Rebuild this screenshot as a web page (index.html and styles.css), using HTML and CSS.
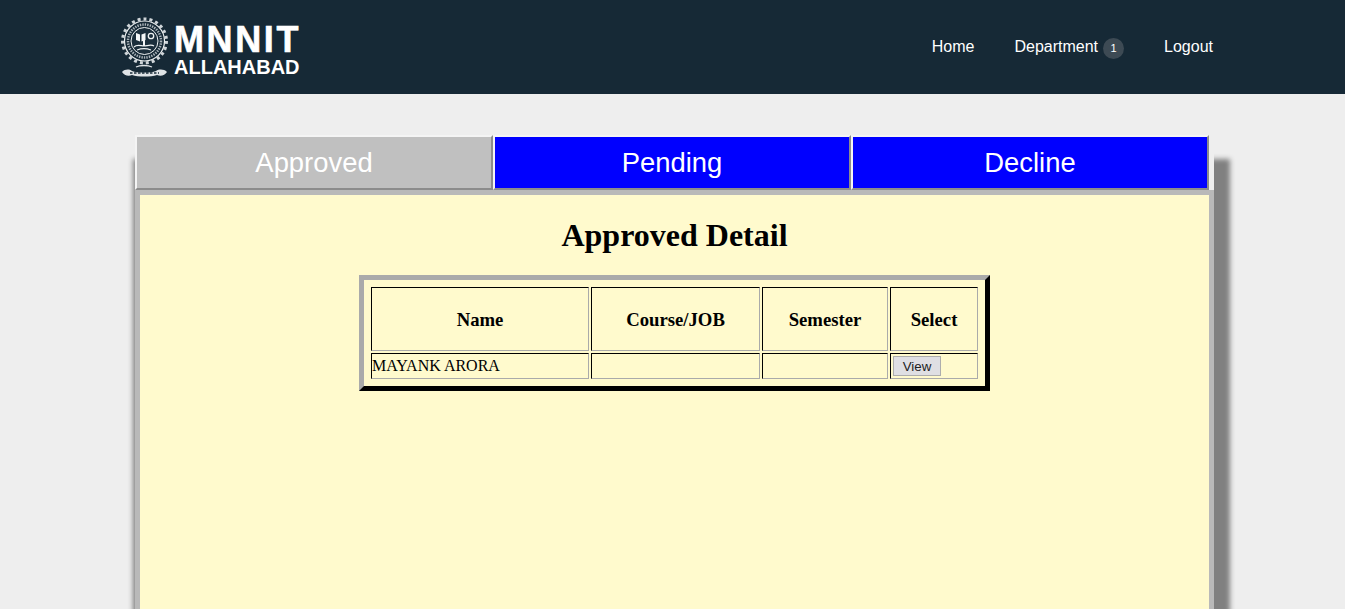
FILE: index.html
```html
<!DOCTYPE html>
<html lang="en">
<head>
<meta charset="utf-8">
<title>Approved Detail</title>
<link rel="stylesheet" href="styles.css">
</head>
<body>
<header class="topbar">
  <a class="brand" href="#">
    <svg class="crest" width="48" height="64" viewBox="0 0 48 64" aria-hidden="true">
      <circle cx="23.500" cy="25" r="22" fill="none" stroke="#cfd5d9" stroke-width="3" stroke-dasharray="3 3"/>
      <circle cx="23.500" cy="25" r="20" fill="none" stroke="#eef1f2" stroke-width="1.200"/>
      <circle cx="23.500" cy="25" r="16.500" fill="none" stroke="#aab3b9" stroke-width="2.500" stroke-dasharray="1.400 1.100"/>
      <circle cx="23.500" cy="25" r="13.500" fill="#1b2e3b" stroke="#eef1f2" stroke-width="1"/>
      <path d="M15 17l4 1.500 0 7-4-1.500zM20.500 18.500l4-1.500 0 7-4 1.500z" fill="#f4f6f7"/>
      <circle cx="30" cy="20" r="2.700" fill="none" stroke="#eef1f2" stroke-width="1.300"/>
      <path d="M13 31c3-3 7-1 10-1s7-2 10 0M16 34c4-1.500 10-1.500 14 0" fill="none" stroke="#eef1f2" stroke-width="1.200"/>
      <path d="M22 24h2v6h-2z" fill="#f4f6f7"/>
      <path d="M1 56c3-3 7-3 10-1 5 2 19 2 24 0 3-2 8-2 11 1-2 3-6 5-10 3-6 2-19 2-25 0-4 2-8 0-10-3z" fill="#dfe3e6"/>
      <path d="M9 57h29" stroke="#1b2e3b" stroke-width="1.400" stroke-dasharray="2.500 1.500"/>
      <path d="M15 51c4-2 12-2 16 0" fill="none" stroke="#dfe3e6" stroke-width="1.300"/>
    </svg>
    <span class="wordmark">
      <span class="wordmark-top">MNNIT</span>
      <span class="wordmark-sub">ALLAHABAD</span>
    </span>
  </a>
  <nav class="nav">
    <a class="nav-link" href="#">Home</a>
    <a class="nav-link" href="#">Department <span class="badge">1</span></a>
    <a class="nav-link" href="#">Logout</a>
  </nav>
</header>
<main class="panel">
  <div class="tabs">
    <a class="tab tab-active" href="#">Approved</a>
    <a class="tab" href="#">Pending</a>
    <a class="tab" href="#">Decline</a>
  </div>
  <section class="content">
    <h2 class="title">Approved Detail</h2>
    <table class="detail">
      <thead>
        <tr>
          <th class="col-name">Name</th>
          <th class="col-course">Course/JOB</th>
          <th class="col-sem">Semester</th>
          <th class="col-select">Select</th>
        </tr>
      </thead>
      <tbody>
        <tr>
          <td>MAYANK ARORA</td>
          <td></td>
          <td></td>
          <td><button class="view" type="button">View</button></td>
        </tr>
      </tbody>
    </table>
  </section>
</main>
</body>
</html>
```
FILE: styles.css
```css
* { box-sizing: border-box; }
html, body { height: 100%; }
body {
  margin: 0;
  background: #eeeeee;
  overflow: hidden;
  font-family: "Liberation Serif", serif;
  color: #000;
}
.topbar {
  height: 94px;
  background: #162936;
  display: flex;
  align-items: center;
  justify-content: space-between;
  padding: 0 132px 0 121px;
}
.brand {
  display: flex;
  align-items: flex-start;
  gap: 5px;
  text-decoration: none;
  color: #fff;
  height: 64px;
  margin-top: 2px;
}
.crest { flex: none; }
.wordmark {
  display: flex;
  flex-direction: column;
  font-family: "Liberation Sans", sans-serif;
  font-weight: 700;
  margin-top: 7px;
}
.wordmark-top {
  font-size: 36px;
  line-height: 34px;
  letter-spacing: 2.6px;
  -webkit-text-stroke: 0.6px #fff;
}
.wordmark-sub { font-size: 20px; line-height: 20px; margin-top: 0; }
.nav {
  display: flex;
  align-items: center;
  gap: 40px;
  font-family: "Liberation Sans", sans-serif;
  font-size: 16px;
}
.nav-link {
  color: #fff;
  text-decoration: none;
  display: flex;
  align-items: center;
  gap: 5px;
}
.badge {
  width: 21px;
  height: 21px;
  border-radius: 50%;
  background: #3d4a54;
  color: #fff;
  font-size: 11px;
  display: flex;
  align-items: center;
  justify-content: center;
  margin-top: 2px;
}
.panel {
  width: 1079px;
  height: 600px;
  margin: 41px 0 0 135px;
  box-shadow: 7px 33px 5px 9px #808080;
}
.tabs {
  display: grid;
  grid-template-columns: repeat(3, 358px);
  height: 55px;
}
.tab {
  display: flex;
  align-items: center;
  justify-content: center;
  background: #0000ff;
  color: #fff;
  font-family: "Liberation Sans", sans-serif;
  font-size: 27.4px;
  text-decoration: none;
  border: 2px solid;
  border-color: #f4f4f4 #8c8c8c #8c8c8c #f4f4f4;
}
.tab-active { background: #c0c0c0; }
.content {
  height: 545px;
  background: #fffacd;
  border: 5px solid #b9b9b9;
  padding-top: 22px;
}
.title {
  margin: 0 0 21px;
  font-size: 32px;
  line-height: 37px;
  font-weight: 700;
  text-align: center;
}
.detail {
  width: 631px;
  margin: 0 auto;
  table-layout: fixed;
  border-collapse: separate;
  border-spacing: 2px;
  padding: 5px;
  border: 5px solid;
  border-color: #aaaaaa #000000 #000000 #aaaaaa;
  font-size: 16px;
}
.detail th, .detail td {
  border: 1px solid;
  border-color: #000000 #aaaaaa #aaaaaa #000000;
  padding: 0;
}
.detail th { height: 64px; padding-top: 2px; font-size: 18.72px; font-weight: 700; text-align: center; }
.detail td { height: 26px; text-align: left; vertical-align: middle; }
.col-name { width: 218px; }
.col-course { width: 169px; }
.col-sem { width: 126px; }
.col-select { width: 88px; }
.view {
  display: block;
  width: 48px;
  height: 20px;
  margin-left: 2px;
  padding: 0;
  background: #dfdfe3;
  border: 1px solid #adadad;
  color: #222;
  font-family: "Liberation Sans", sans-serif;
  font-size: 13.33px;
}
```
